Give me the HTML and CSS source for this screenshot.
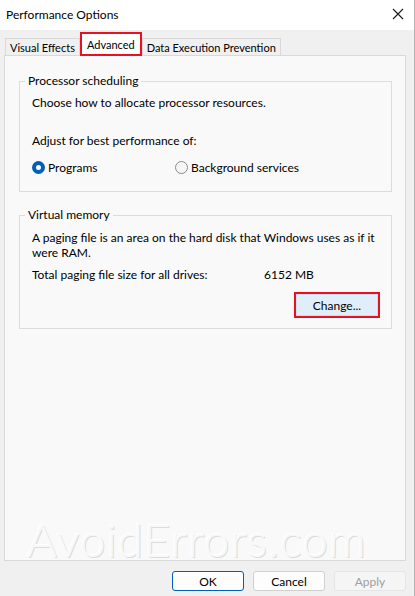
FILE: index.html
```html
<!DOCTYPE html>
<html>
<head>
<meta charset="utf-8">
<link rel="stylesheet" href="styles.css">
</head>
<body>
<div class="window">
  <div class="titlebar">
    <span class="title">Performance Options</span>
    <svg class="close" width="12" height="12" viewBox="0 0 12 12"><path d="M1 1 L11 11 M11 1 L1 11" stroke="#1a1a1a" stroke-width="1.1" fill="none"/></svg>
  </div>
  <div class="tabs">
    <div class="tab">Visual Effects</div>
    <div class="tab tab-active">Advanced</div>
    <div class="tab">Data Execution Prevention</div>
  </div>
  <div class="panel">
    <fieldset class="group group-proc">
      <legend>Processor scheduling</legend>
      <p class="line">Choose how to allocate processor resources.</p>
      <p class="line adjust">Adjust for best performance of:</p>
      <div class="radios">
        <label class="radio radio-programs"><span class="dot dot-on"></span>Programs</label>
        <label class="radio"><span class="dot"></span>Background services</label>
      </div>
    </fieldset>
    <fieldset class="group group-vm">
      <legend>Virtual memory</legend>
      <p class="line para">A paging file is an area on the hard disk that Windows uses as if it were RAM.</p>
      <div class="total">
        <span class="total-label">Total paging file size for all drives:</span>
        <span>6152 MB</span>
      </div>
      <div class="change-row">
        <div class="highlight"><div class="btn btn-change">Change...</div></div>
      </div>
    </fieldset>
    <div class="watermark">AvoidErrors.com</div>
  </div>
  <div class="footer">
    <div class="btn btn-ok">OK</div>
    <div class="btn">Cancel</div>
    <div class="btn btn-disabled">Apply</div>
  </div>
</div>
</body>
</html>
```
FILE: styles.css
```css
html, body {
  margin: 0;
  padding: 0;
}
body {
  width: 415px;
  height: 596px;
  background: #f0f0f0;
  font-family: "Lato", "Noto Sans", sans-serif;
  font-size: 12px;
  color: #000;
  overflow: hidden;
}
.window {
  width: 414px;
  height: 596px;
  border-right: 1px solid #b4b4b4;
  box-sizing: content-box;
  display: flex;
  flex-direction: column;
}
.titlebar {
  height: 30px;
  background: #fff;
  display: flex;
  align-items: center;
  justify-content: space-between;
  padding: 0 10px 0 6px;
}
.title {
  font-size: 12px;
  margin-top: -2px;
}
.close {
  margin-top: -3px;
}
.tabs {
  display: flex;
  align-items: flex-end;
  padding-left: 5px;
  height: 26px;
  font-size: 11px;
}
.tab {
  height: 18px;
  line-height: 18px;
  padding: 0 4px;
  border: 1px solid #d9d9d9;
  border-bottom: none;
  background: #f0f0f0;
  box-sizing: border-box;
}
.tab-active {
  height: 24px;
  line-height: 21px;
  background: #fff;
  border: 2px solid #e81123;
  padding: 0 5px;
  margin: 0;
  position: relative;
  z-index: 1;
}
.panel {
  margin-left: 4px;
  width: 402px;
  height: 506px;
  box-sizing: border-box;
  border: 1px solid #d9d9d9;
  background: #f9f9f9;
  margin-top: -1px;
  padding: 18px 13px 0 14px;
  position: relative;
}
.group {
  margin: 0;
  border: 1px solid #dcdcdc;
  padding: 0 12px;
  min-width: 0;
}
.group legend {
  padding: 0 3px;
  margin-left: -7px;
  line-height: 14px;
}
.line {
  margin: 0;
  line-height: 15px;
}
.group-proc {
  height: 118px;
  box-sizing: border-box;
}
.group-proc .line:first-of-type {
  margin-top: 7px;
}
.adjust {
  margin-top: 23px !important;
}
.radios {
  display: flex;
  margin-top: 12px;
  line-height: 15px;
}
.radio {
  display: flex;
  align-items: center;
}
.radio-programs {
  width: 143px;
}
.dot {
  width: 13px;
  height: 13px;
  border-radius: 50%;
  box-sizing: border-box;
  border: 1px solid #8b8b8b;
  background: #f6f6f6;
  margin-right: 3px;
}
.dot-on {
  border: 4px solid #005fb8;
  background: #fff;
}
.group-vm {
  margin-top: 16px;
  height: 121px;
  box-sizing: border-box;
}
.para {
  margin-top: 8px;
  width: 350px;
}
.total {
  display: flex;
  margin-top: 7px;
  line-height: 15px;
}
.total-label {
  width: 232px;
}
.change-row {
  display: flex;
  justify-content: flex-end;
  margin-top: 10px;
  margin-right: -1px;
}
.highlight {
  border: 2px solid #e81123;
}
.btn {
  width: 72px;
  height: 20px;
  box-sizing: border-box;
  border: 1px solid #d0d0d0;
  border-radius: 3px;
  background: #fdfdfd;
  display: flex;
  align-items: center;
  justify-content: center;
}
.btn-change {
  width: 82px;
  height: 22px;
  border-radius: 0;
  border: 1px solid #c9dff2;
  background: #e0eef9;
}
.watermark {
  position: absolute;
  left: 22px;
  top: 456px;
  font-family: "Lato", sans-serif;
  font-weight: 300;
  font-size: 46px;
  letter-spacing: 1px;
  color: #f8f8f8;
  text-shadow: -1px -1px 0 #ffffff, 1px 1px 0 #dcdcdc;
  white-space: nowrap;
}
.footer {
  display: flex;
  justify-content: flex-end;
  gap: 9px;
  padding: 10px 8px 0 0;
}
.btn-ok {
  border: 1px solid #005fb8;
}
.btn-disabled {
  color: #a0a0a0;
  background: #f5f5f5;
  border-color: #e5e5e5;
}
```
